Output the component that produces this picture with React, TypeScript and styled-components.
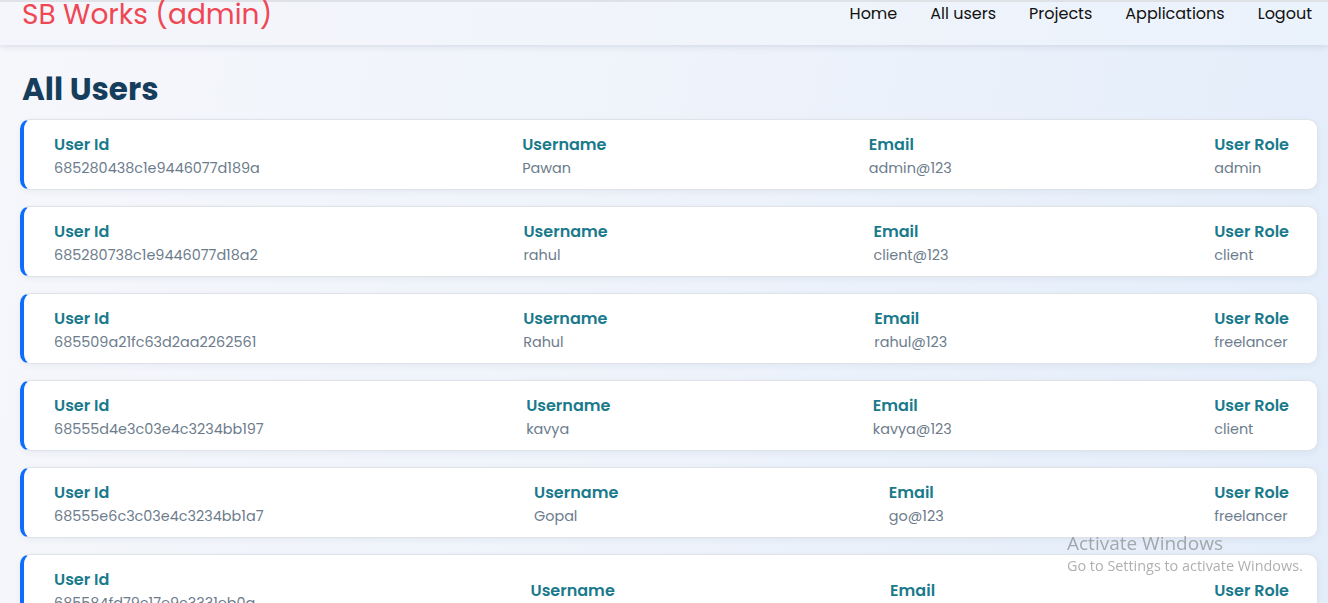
import React from "react";
import styled, { createGlobalStyle } from "styled-components";

const GlobalStyle = createGlobalStyle`
  html, body { margin: 0; padding: 0; scrollbar-width: none; }
  html::-webkit-scrollbar, body::-webkit-scrollbar { display: none; }
  body {
    font-family: "Poppins", "Open Sans", "Liberation Sans", sans-serif;
    background: linear-gradient(100deg, #f6f7fb 0%, #eef3fb 50%, #e3edfa 100%);
    min-height: 100vh;
  }
`;

const Page = styled.div`
  display: flex;
  flex-direction: column;
  min-height: 100vh;
  border-top: 2px solid #e3e6ea;
`;

const NavBar = styled.nav`
  height: 43px;
  display: flex;
  align-items: flex-start;
  justify-content: space-between;
  padding: 0 16px 0 22px;
  background: linear-gradient(90deg, #f5f6fb 0%, #f0f4fb 60%, #eaf2fc 100%);
  box-shadow: 0 2px 6px rgba(40, 60, 90, 0.12);
`;

const Logo = styled.div`
  font-size: 28px;
  line-height: 28px;
  margin-top: -1px;
  color: #ef4754;
  font-weight: 400;
`;

const NavLinks = styled.div`
  display: flex;
  gap: 33px;
  padding-top: 1px;
`;

const NavLink = styled.a`
  font-size: 16px;
  line-height: 22px;
  color: #111;
  text-decoration: none;
  cursor: pointer;
`;

const Main = styled.main`
  padding: 26px 10px 0 20px;
  display: flex;
  flex-direction: column;
`;

const Title = styled.h1`
  margin: 0 0 12px 2px;
  font-size: 31px;
  line-height: 36px;
  font-weight: 700;
  color: #163e5c;
`;

const List = styled.div`
  display: flex;
  flex-direction: column;
  gap: 16px;
`;

const Card = styled.div`
  display: flex;
  align-items: center;
  justify-content: space-between;
  background: #fff;
  border: 1px solid #dfe3e8;
  border-left: 4px solid #0d6efd;
  border-radius: 10px;
  box-shadow: 0 2px 6px rgba(30, 60, 100, 0.06);
  padding: 13px 28px 10px 30px;
`;

const Field = styled.div<{ $extra?: boolean }>`
  display: flex;
  flex-direction: column;
  padding-bottom: ${(p) => (p.$extra ? "22px" : "0")};
`;

const Label = styled.span`
  font-size: 16px;
  line-height: 24px;
  font-weight: 600;
  color: #1a7a8c;
`;

const Value = styled.span`
  font-size: 14.4px;
  line-height: 22px;
  color: #6c7c8c;
`;

const Watermark = styled.div`
  position: fixed;
  left: 1067px;
  top: 530px;
  font-family: "Open Sans", "Liberation Sans", sans-serif;
  color: rgba(110, 110, 110, 0.55);
  pointer-events: none;
`;

const WatermarkTitle = styled.div`
  font-size: 19px;
  line-height: 26px;
`;

const WatermarkSub = styled.div`
  font-size: 14.4px;
  line-height: 20px;
  margin-top: 0px;
`;

const users = [
  { id: "685280438c1e9446077d189a", name: "Pawan", email: "admin@123", role: "admin" },
  { id: "685280738c1e9446077d18a2", name: "rahul", email: "client@123", role: "client" },
  { id: "685509a21fc63d2aa2262561", name: "Rahul", email: "rahul@123", role: "freelancer" },
  { id: "68555d4e3c03e4c3234bb197", name: "kavya", email: "kavya@123", role: "client" },
  { id: "68555e6c3c03e4c3234bb1a7", name: "Gopal", email: "go@123", role: "freelancer" },
  { id: "685584fd79c17e9c3331eb0a", name: "Ravi Kumar", email: "rs@123", role: "client", tall: true },
];

export default function App() {
  return (
    <>
      <GlobalStyle />
      <Page>
        <NavBar>
          <Logo>SB Works (admin)</Logo>
          <NavLinks>
            <NavLink>Home</NavLink>
            <NavLink>All users</NavLink>
            <NavLink>Projects</NavLink>
            <NavLink>Applications</NavLink>
            <NavLink>Logout</NavLink>
          </NavLinks>
        </NavBar>
        <Main>
          <Title>All Users</Title>
          <List>
            {users.map((u) => (
              <Card key={u.id}>
                <Field $extra={u.tall}>
                  <Label>User Id</Label>
                  <Value>{u.id}</Value>
                </Field>
                <Field>
                  <Label>Username</Label>
                  <Value>{u.name}</Value>
                </Field>
                <Field>
                  <Label>Email</Label>
                  <Value>{u.email}</Value>
                </Field>
                <Field>
                  <Label>User Role</Label>
                  <Value>{u.role}</Value>
                </Field>
              </Card>
            ))}
          </List>
        </Main>
      </Page>
      <Watermark>
        <WatermarkTitle>Activate Windows</WatermarkTitle>
        <WatermarkSub>Go to Settings to activate Windows.</WatermarkSub>
      </Watermark>
    </>
  );
}
